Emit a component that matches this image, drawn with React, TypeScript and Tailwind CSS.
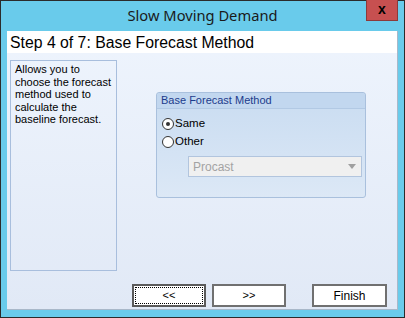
import React, { useState } from "react";

// Wizard step dialog: base forecast method
const App: React.FC = () => {
  const [method, setMethod] = useState<"same" | "other">("same");

  return (
    <div className="w-[405px] h-[318px] bg-[#69cbeb] border border-[#2b2b2b] flex flex-col font-['Liberation_Sans',Arial,sans-serif] text-black select-none">
      {/* Title bar */}
      <div className="h-[30px] flex items-start relative shrink-0">
        <div className="flex-1 h-full flex items-center justify-center font-['Noto_Sans',sans-serif] text-[14.7px] text-[#1a1a1a] pb-[1px]">
          Slow Moving Demand
        </div>
        <div className="absolute right-[6px] top-[-1px] w-[32px] h-[21px] bg-[#c75050] border border-[#8c3a3a] border-t-0 flex items-center justify-center text-[14px] font-bold leading-none font-['Liberation_Sans',sans-serif] pb-[2px]">
          x
        </div>
      </div>

      {/* Client area */}
      <div className="ml-[6px] mr-[6px] mb-[7px] flex-1 flex flex-col bg-gradient-to-b from-[#eef4fd] to-[#e1e9f6] border-r border-b border-[#a9b8c9]">
        <div className="h-[22px] bg-white flex items-center pl-[3px] pt-[1px] text-[15.8px] leading-none shrink-0">
          Step 4 of 7: Base Forecast Method
        </div>

        <div className="flex items-start pl-[3px] pt-[7px]">
          <div className="w-[107px] h-[211px] border border-[#a8bedd] pl-[4px] pr-[2px] pt-[2px] text-[11px] leading-[12.5px]">
            Allows you to choose the forecast method used to calculate the baseline forecast.
          </div>

          <div className="ml-[39px] mt-[32px] w-[210px] h-[106px] rounded-[3px] border border-[#a9c0dd] bg-gradient-to-b from-[#c9dcf1] to-[#dce8f6] flex flex-col">
            <div className="h-[16px] bg-[#c2d7ef] rounded-t-[3px] border-b border-[#b2c9e4] pl-[4px] flex items-center text-[11px] text-[#1c3b8c]">
              Base Forecast Method
            </div>
            <div className="flex flex-col pl-[5px] pt-[9px] gap-[6px] text-[11.5px]">
              <label className="flex items-center gap-[1px] h-[12px]" onClick={() => setMethod("same")}>
                <span className="w-[12px] h-[12px] rounded-full border border-[#333] bg-white flex items-center justify-center">
                  {method === "same" && <span className="w-[4px] h-[4px] rounded-full bg-[#333]" />}
                </span>
                <span>Same</span>
              </label>
              <label className="flex items-center gap-[1px] h-[12px]" onClick={() => setMethod("other")}>
                <span className="w-[12px] h-[12px] rounded-full border border-[#333] bg-white flex items-center justify-center">
                  {method === "other" && <span className="w-[4px] h-[4px] rounded-full bg-[#333]" />}
                </span>
                <span>Other</span>
              </label>
            </div>
            <div className="ml-[31px] mt-[8px] w-[174px] h-[21px] bg-[#f0f0f0] border border-[#b2c5de] flex items-center pl-[4px] pr-[4px] text-[12px] text-[#a3a3a3]">
              <span className="flex-1">Procast</span>
              <svg width="8" height="5" viewBox="0 0 8 5" className="mr-[1px]">
                <path d="M0 0 H8 L4 5 Z" fill="#a0a0a0" />
              </svg>
            </div>
          </div>
        </div>

        {/* Buttons */}
        <div className="flex items-start pl-[125px] pt-[13px] gap-[6px] text-[12px]">
          <button className="w-[74px] h-[23px] bg-white border-2 border-[#5a5a5a] p-[1px]">
            <span className="w-full h-full border border-dotted border-black flex items-center justify-center text-[11px]">
              &lt;&lt;
            </span>
          </button>
          <button className="w-[74px] h-[23px] bg-white border-2 border-[#707070] flex items-center justify-center text-[11px]">
            &gt;&gt;
          </button>
          <button className="ml-[20px] w-[75px] h-[23px] bg-white border-2 border-[#707070] flex items-center justify-center">
            Finish
          </button>
        </div>
      </div>
    </div>
  );
};

export default App;
